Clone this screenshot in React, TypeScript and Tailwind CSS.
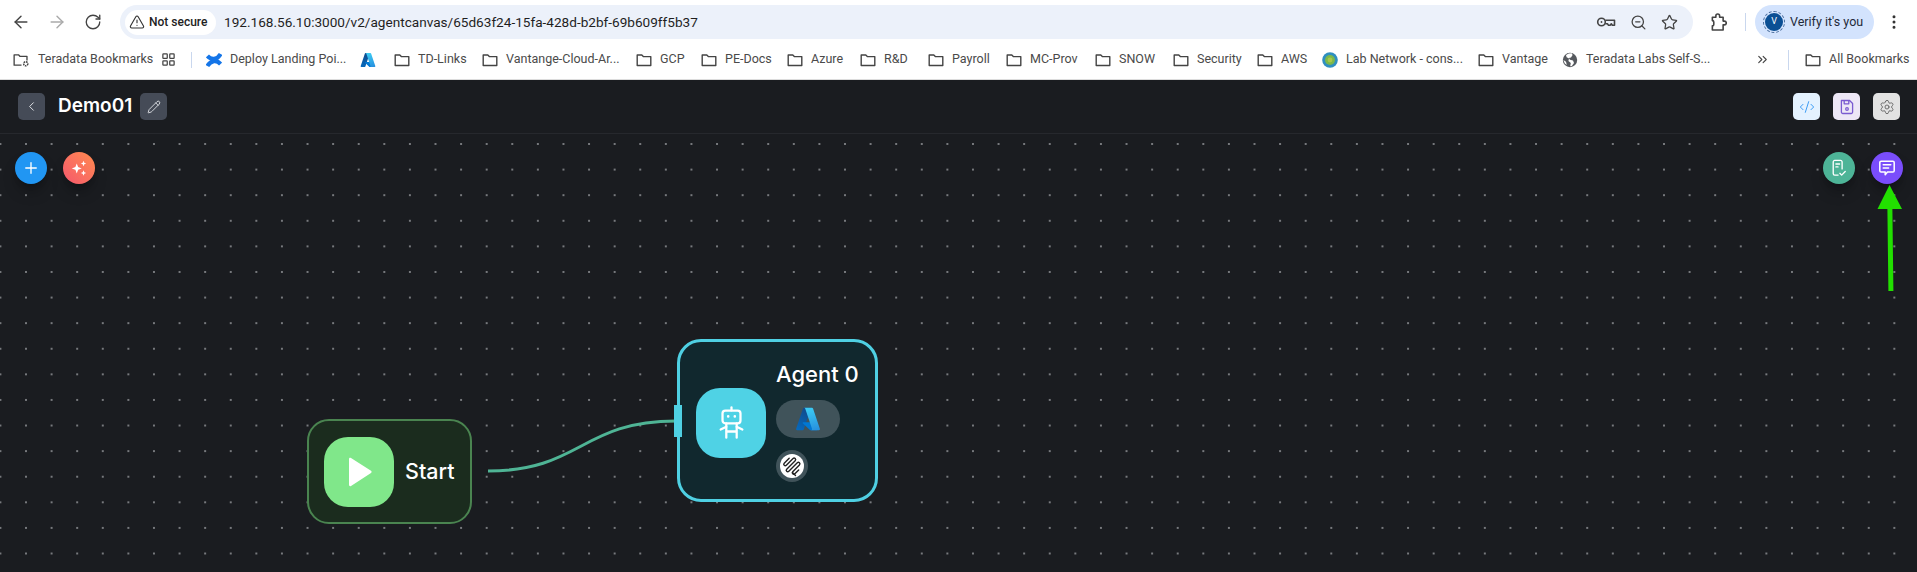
import React from 'react';
import {
  ArrowLeft,
  ArrowRight,
  RotateCw,
  TriangleAlert,
  ZoomOut,
  Star,
  EllipsisVertical,
  LayoutGrid,
  ChevronsRight,
  ChevronLeft,
  Pencil,
  CodeXml,
  Settings,
  Plus,
} from 'lucide-react';

function FolderIcon({ className = '' }: { className?: string }) {
  return (
    <svg viewBox="0 0 16 16" className={`w-4 h-4 shrink-0 ${className}`} fill="none" stroke="#444" strokeWidth="1.4">
      <path d="M1.2 3h4.600l1.500 1.600h7.500v8.900H1.200z" strokeLinejoin="round" />
    </svg>
  );
}

function FolderCogIcon() {
  return (
    <svg viewBox="0 0 18 16" className="w-[17px] h-4 shrink-0" fill="none" stroke="#444" strokeWidth="1.4">
      <path d="M9 13.500H1.200V2.500h4.600l1.500 1.600h7.500v4.400" strokeLinejoin="round" />
      <circle cx="13.500" cy="12" r="2.200" strokeWidth="1.600" strokeDasharray="1.600 0.800" />
    </svg>
  );
}

function AzureIcon({ className = 'w-4 h-4' }: { className?: string }) {
  return (
    <svg viewBox="0 0 96 96" className={`shrink-0 ${className}`}>
      <defs>
        <linearGradient id="az-a" x1="0.6" y1="0" x2="0.2" y2="1">
          <stop offset="0" stopColor="#114a8b" />
          <stop offset="1" stopColor="#0669bc" />
        </linearGradient>
        <linearGradient id="az-b" x1="0.4" y1="0" x2="0.6" y2="1">
          <stop offset="0" stopColor="#3ccbf4" />
          <stop offset="1" stopColor="#2892df" />
        </linearGradient>
      </defs>
      <path fill="url(#az-a)" d="M33.338 6.544h26.038l-27.03 80.087a4.152 4.152 0 0 1-3.933 2.824H8.149a4.145 4.145 0 0 1-3.928-5.47L29.404 9.368a4.152 4.152 0 0 1 3.934-2.824z" />
      <path fill="#0078d4" d="M71.175 60.261h-41.29a1.911 1.911 0 0 0-1.305 3.309l26.532 24.764a4.171 4.171 0 0 0 2.846 1.121h23.38z" />
      <path fill="url(#az-b)" d="M66.595 9.364a4.145 4.145 0 0 0-3.928-2.82H33.648a4.146 4.146 0 0 1 3.928 2.82l25.184 74.62a4.146 4.146 0 0 1-3.928 5.472h29.02a4.146 4.146 0 0 0 3.927-5.472z" />
    </svg>
  );
}

function ConfluenceIcon() {
  return (
    <svg viewBox="0 0 16 16" className="w-4 h-4 shrink-0" fill="none" stroke="#1475e8" strokeWidth="4.200">
      <path d="M1.400 14C5 8.200 10.500 7.400 14.600 12" />
      <path d="M14.600 2C11 7.800 5.500 8.600 1.400 4" />
    </svg>
  );
}

function LabIcon() {
  return (
    <svg viewBox="0 0 16 16" className="w-4 h-4 shrink-0">
      <circle cx="8" cy="8" r="7.800" fill="#2f8fc0" />
      <circle cx="8" cy="8" r="5" fill="#7cb84a" />
      <circle cx="8" cy="8" r="2.400" fill="#a8c94a" />
    </svg>
  );
}

function GlobeIcon() {
  return (
    <svg viewBox="0 0 16 16" className="w-4 h-4 shrink-0">
      <circle cx="8" cy="8" r="7.200" fill="#56595e" />
      <path fill="#fff" d="M6.800 1.400 4 3l.6 2.200L7 6.600l-.6 2.400L8.800 11l-.6 3.200 1.600-.2 2.200-3-1-2.400-3-.9L6.800 6l2.200-.6L10.600 3 9.600 1.300zM1.400 8l2.600 1.800.8 3.200-2-1.400z" />
    </svg>
  );
}

function KeyIcon() {
  return (
    <svg viewBox="0 0 20 16" className="w-[20px] h-4" fill="none" stroke="#444" strokeWidth="1.600">
      <circle cx="5.500" cy="8" r="3.800" />
      <circle cx="5.500" cy="8" r="0.900" fill="#444" stroke="none" />
      <path d="M9.300 6.200h9.200v5h-2.200l-1-1.400-1.200 1.400h-1.600l-1.100-1.400H9.300" strokeLinejoin="round" />
    </svg>
  );
}

function PuzzleIcon() {
  return (
    <svg viewBox="0 0 18 20" className="ml-[17px] w-[17px] h-[19px]" fill="none" stroke="#444" strokeWidth="1.700" strokeLinejoin="round">
      <path d="M2.500 4.500h3.700V3a2 2 0 0 1 4 0v1.500h3.700v4h1.300a2 2 0 0 1 0 4h-1.300v5.500H2.500v-4.500a1.500 1.500 0 0 0 1.500-1.500V9.500A1.500 1.500 0 0 0 2.500 8z" />
    </svg>
  );
}

function FloppyIcon() {
  return (
    <svg viewBox="0 0 16 16" className="w-[16px] h-[16px]" fill="none" stroke="#7a5bd0" strokeWidth="1.300" strokeLinejoin="round">
      <path d="M2.400 1.500h8.200l3 3v8.600a1.400 1.400 0 0 1-1.400 1.400H3.800a1.400 1.400 0 0 1-1.400-1.400z" />
      <path d="M5.200 1.600v3.200h4.600V1.600" />
      <circle cx="8" cy="10" r="1.300" />
    </svg>
  );
}

function ReportIcon() {
  return (
    <svg viewBox="0 0 18 20" className="w-[16px] h-[18px]" fill="none" stroke="#fff" strokeWidth="1.500" strokeLinecap="round" strokeLinejoin="round">
      <path d="M8 18H4.200A1.700 1.700 0 0 1 2.500 16.300V3.200A1.700 1.700 0 0 1 4.200 1.500h6.600a1.700 1.700 0 0 1 1.700 1.700V11" />
      <path d="M5.500 5.500h4.200M5.500 8.800h2.400" />
      <path d="M10 16l2 2 4-4" />
    </svg>
  );
}

function ChatIcon() {
  return (
    <svg viewBox="0 0 20 20" className="w-[18px] h-[18px]" fill="none" stroke="#fff" strokeWidth="1.700" strokeLinecap="round" strokeLinejoin="round">
      <path d="M3.500 2.500h13a1.500 1.500 0 0 1 1.500 1.500v9a1.500 1.500 0 0 1-1.500 1.500h-6L8 17.500v-3H3.500A1.500 1.500 0 0 1 2 13V4a1.500 1.500 0 0 1 1.500-1.500z" />
      <path d="M5.800 6.500h8.400M5.800 10h6" />
    </svg>
  );
}

function SparkleIcon() {
  return (
    <svg viewBox="0 0 20 20" className="w-[18px] h-[18px]" fill="#fff">
      <path d="M7.500 5 9 9l4 1.500L9 12l-1.500 4L6 12l-4-1.500L6 9z" />
      <path d="M15 2l.9 2.100 2.100.9-2.100.9L15 8l-.9-2.100L12 5l2.100-.9z" />
      <path d="M15 12.500l.9 2.100 2.100.9-2.100.9-.9 2.100-.9-2.100-2.100-.9 2.100-.9z" />
    </svg>
  );
}

function RobotIcon() {
  return (
    <svg viewBox="0 0 26 36" className="w-[25px] h-[34px]" fill="none" stroke="#fff" strokeWidth="2.400" strokeLinecap="round" strokeLinejoin="round">
      <path d="M13 1.500v3" />
      <rect x="3.500" y="4.800" width="19" height="13.500" rx="3" />
      <path d="M9.500 11h.01M16.500 11h.01" strokeWidth="2.800" />
      <path d="M7.500 18.500v15M18.500 18.500v15M7.500 27h11" />
      <path d="M7.500 22 1.500 25M18.500 22l6 3" />
    </svg>
  );
}

function ClipIcon() {
  return (
    <svg viewBox="0 0 24 24" className="w-[24px] h-[24px]" fill="none" stroke="#222" strokeWidth="1.400" strokeLinecap="round" strokeLinejoin="round">
      <g transform="rotate(45 12 12)">
        <path d="M4.500 8.500v7a1.500 1.500 0 0 0 3 0V6a1.500 1.500 0 0 1 3 0v12a1.500 1.500 0 0 0 3 0V6a1.500 1.500 0 0 1 3 0v9.500a1.500 1.500 0 0 0 3 0V10" />
      </g>
      <path d="M13 19l2.500 2.500" />
    </svg>
  );
}

const bookmarks = [
  { label: 'GCP', w: 'w-[23px]' },
  { label: 'PE-Docs', w: 'w-[44px]' },
  { label: 'Azure', w: 'w-[31px]' },
  { label: 'R&D', w: 'w-[26px]' },
  { label: 'Payroll', w: 'w-[36px]' },
  { label: 'MC-Prov', w: 'w-[47px]' },
  { label: 'SNOW', w: 'w-[36px]' },
  { label: 'Security', w: 'w-[42px]' },
  { label: 'AWS', w: 'w-[23px]' },
];

function Bookmark({ icon, label, w }: { icon?: React.ReactNode; label: string; w: string }) {
  return (
    <div className="flex items-center gap-2 shrink-0">
      {icon ?? <FolderIcon />}
      <span className={`${w} whitespace-nowrap`}>{label}</span>
    </div>
  );
}

function BrowserChrome() {
  return (
    <>
      <div className="h-[40px] bg-white flex items-center shrink-0 pt-[4px] pl-[11px] pr-[12px]">
        <div className="flex items-center gap-[16px] text-[#444]">
          <ArrowLeft className="w-[20px] h-[20px]" strokeWidth={1.7} />
          <ArrowRight className="w-[20px] h-[20px] text-[#aaa]" strokeWidth={1.7} />
          <RotateCw className="w-[18px] h-[18px] ml-[1px]" strokeWidth={1.8} />
        </div>
        <div className="ml-[18px] w-[1573px] h-[34px] rounded-full bg-[#ecf1fa] flex items-center pl-[5px] pr-[15px]">
          <div className="h-[25px] w-[91px] rounded-full bg-white flex items-center pl-[4px] gap-[4px] shrink-0">
            <TriangleAlert className="w-[16px] h-[16px] text-[#333]" strokeWidth={1.7} />
            <span className="text-[12px] font-medium text-[#222] whitespace-nowrap">Not secure</span>
          </div>
          <span className="ml-[8px] text-[13.6px] text-[#1f1f1f] whitespace-nowrap">192.168.56.10:3000/v2/agentcanvas/65d63f24-15fa-428d-b2bf-69b609ff5b37</span>
          <div className="ml-auto flex items-center gap-[14px] text-[#444]">
            <KeyIcon />
            <ZoomOut className="w-[17px] h-[17px]" strokeWidth={1.8} />
            <Star className="w-[17px] h-[17px]" strokeWidth={1.8} />
          </div>
        </div>
        <PuzzleIcon />
        <div className="ml-[18px] w-px h-[18px] bg-[#c9d7ee]" />
        <div className="ml-[9px] w-[119px] h-[34px] rounded-full bg-[#d3e3fd] flex items-center pl-[10px] gap-[7px]">
          <div className="w-[18px] h-[18px] rounded-full bg-[#0b4f94] outline-1 outline-dashed outline-offset-1 outline-[#4c6f9e] flex items-center justify-center text-[9px] text-white shrink-0">V</div>
          <span className="text-[12.5px] text-[#1f2a3a] whitespace-nowrap">Verify it's you</span>
        </div>
        <EllipsisVertical className="ml-[11px] w-[18px] h-[18px] text-[#333]" strokeWidth={2} />
      </div>
      <div className="h-[40px] bg-white border-b border-[#dcdcdc] flex items-center shrink-0 pl-[13px] pr-[13px] gap-[18px] text-[12.500px] text-[#4a4a4a]">
        <Bookmark icon={<FolderCogIcon />} label="Teradata Bookmarks" w="w-[105px]" />
        <LayoutGrid className="w-[15px] h-[15px] -mr-[3px] shrink-0 text-[#444]" strokeWidth={2} />
        <div className="w-px h-[16px] bg-[#c9d7ee] -mr-[4px] shrink-0" />
        <Bookmark icon={<ConfluenceIcon />} label="Deploy Landing Poi..." w="w-[112px]" />
        <AzureIcon />
        <Bookmark label="TD-Links" w="w-[46px]" />
        <Bookmark label="Vantange-Cloud-Ar..." w="w-[112px]" />
        {bookmarks.map((b) => (
          <Bookmark key={b.label} label={b.label} w={b.w} />
        ))}
        <Bookmark icon={<LabIcon />} label="Lab Network - cons..." w="w-[114px]" />
        <Bookmark label="Vantage" w="w-[42px]" />
        <Bookmark icon={<GlobeIcon />} label="Teradata Labs Self-S..." w="w-[114px]" />
        <ChevronsRight className="ml-auto w-[15px] h-[15px] text-[#444] shrink-0" strokeWidth={1.8} />
        <div className="w-px h-[20px] bg-[#c9d7ee] shrink-0" />
        <div className="-ml-[2px]">
          <Bookmark label="All Bookmarks" w="w-[75px]" />
        </div>
      </div>
    </>
  );
}

function AppHeader() {
  return (
    <div className="h-[54px] bg-[#1a1c20] border-b border-[#26282d] flex items-center shrink-0 pl-[18px] pr-[17px]">
      <button className="w-[27px] h-[27px] rounded-[5px] bg-[#454b57] flex items-center justify-center text-[#e5e7eb]">
        <ChevronLeft className="w-[15px] h-[15px]" strokeWidth={1.5} />
      </button>
      <h1 className="ml-[13px] w-[82px] text-[19px] font-semibold text-white">Demo01</h1>
      <button className="w-[27px] h-[27px] rounded-[5px] bg-[#454b57] flex items-center justify-center text-[#e5e7eb]">
        <Pencil className="w-[14px] h-[14px]" strokeWidth={1.5} />
      </button>
      <div className="ml-auto flex items-center gap-[13px]">
        <button className="w-[27px] h-[27px] rounded-[5px] bg-[#e4f2ff] flex items-center justify-center text-[#3b9cf5]">
          <CodeXml className="w-[16px] h-[16px]" strokeWidth={1.5} />
        </button>
        <button className="w-[27px] h-[27px] rounded-[5px] bg-[#ede7f6] flex items-center justify-center">
          <FloppyIcon />
        </button>
        <button className="w-[27px] h-[27px] rounded-[5px] bg-[#e2e2e2] flex items-center justify-center text-[#666]">
          <Settings className="w-[16px] h-[16px]" strokeWidth={1.4} />
        </button>
      </div>
    </div>
  );
}

function StartNode() {
  return (
    <div className="absolute left-[307px] top-[285px] w-[165px] h-[105px] rounded-[22px] border-2 border-[#4a8450] bg-[#1b2c1e] flex items-center pl-[15px] gap-[11px]">
      <div className="w-[70px] h-[70px] rounded-[24px] bg-[#80e78a] flex items-center justify-center">
        <svg viewBox="0 0 24 30" className="w-[24px] h-[30px] ml-[1px]" fill="#fff">
          <path d="M1 2.200C1 1 2 .5 3 1.100l20 12.700c.8.500.8 1.600 0 2.100L3 28.900C2 29.500 1 29 1 27.800z" />
        </svg>
      </div>
      <span className="text-[21.500px] font-medium text-white">Start</span>
    </div>
  );
}

function AgentNode() {
  return (
    <div className="absolute left-[677px] top-[205px] w-[201px] h-[163px] rounded-[24px] border-[3px] border-[#4fd0e3] bg-[#11282e] flex items-center pl-[16px] gap-[10px]">
      <div className="w-[70px] h-[70px] rounded-[24px] bg-[#4fd2e5] flex items-center justify-center mt-[4px]">
        <RobotIcon />
      </div>
      <div className="flex flex-col items-start gap-[12px]">
        <span className="text-[22px] leading-[28px] font-medium text-white whitespace-nowrap">Agent 0</span>
        <div className="w-[64px] h-[38px] rounded-full bg-[#40535a] flex items-center justify-center">
          <AzureIcon className="w-[26px] h-[26px]" />
        </div>
        <div className="w-[32px] h-[32px] rounded-full bg-[#40535a] flex items-center justify-center">
          <div className="w-[24px] h-[24px] rounded-full bg-white flex items-center justify-center overflow-hidden">
            <ClipIcon />
          </div>
        </div>
      </div>
      {/* input handle */}
      <div className="absolute -left-[6px] top-[63px] w-[8px] h-[32px] bg-[#4fd0e3]" />
    </div>
  );
}

function Canvas() {
  return (
    <div className="relative flex-1 bg-[#1a1c20] bg-[radial-gradient(circle,#77797d_1px,transparent_1px)] bg-[length:25.6px_25.6px] bg-[position:-12.4px_-2.8px]">
      <svg className="absolute inset-0 w-full h-full pointer-events-none" fill="none">
        <path d="M488 337C581 337 581 287 676 287" stroke="#4fb495" strokeWidth="3" />
      </svg>

      <StartNode />
      <AgentNode />

      <div className="absolute left-[15px] top-[18px] flex gap-[16px]">
        <button className="w-[32px] h-[32px] rounded-full bg-[#2196f3] shadow-lg shadow-black/30 flex items-center justify-center text-white">
          <Plus className="w-[18px] h-[18px]" strokeWidth={1.8} />
        </button>
        <button className="w-[32px] h-[32px] rounded-full bg-linear-to-bl from-[#ff8a4c] to-[#f5566c] shadow-lg shadow-black/30 flex items-center justify-center">
          <SparkleIcon />
        </button>
      </div>

      <div className="absolute right-[14px] top-[18px] flex gap-[16px]">
        <button className="w-[32px] h-[32px] rounded-full bg-[#4db497] shadow-lg shadow-black/30 flex items-center justify-center">
          <ReportIcon />
        </button>
        <button className="w-[32px] h-[32px] rounded-full bg-[#7a4dfb] shadow-lg shadow-black/30 flex items-center justify-center">
          <ChatIcon />
        </button>
      </div>

      {/* annotation arrow */}
      <svg className="absolute inset-0 w-full h-full pointer-events-none">
        <path d="M1889.500 51 1902 75h-9.600l1 82h-5l-1-82H1877.500z" fill="#22e000" />
      </svg>
    </div>
  );
}

export default function App() {
  return (
    <div className="w-[1917px] h-[572px] overflow-hidden flex flex-col font-['Inter',sans-serif]">
      <div className="font-['Roboto',sans-serif] shrink-0">
        <BrowserChrome />
      </div>
      <AppHeader />
      <Canvas />
    </div>
  );
}
